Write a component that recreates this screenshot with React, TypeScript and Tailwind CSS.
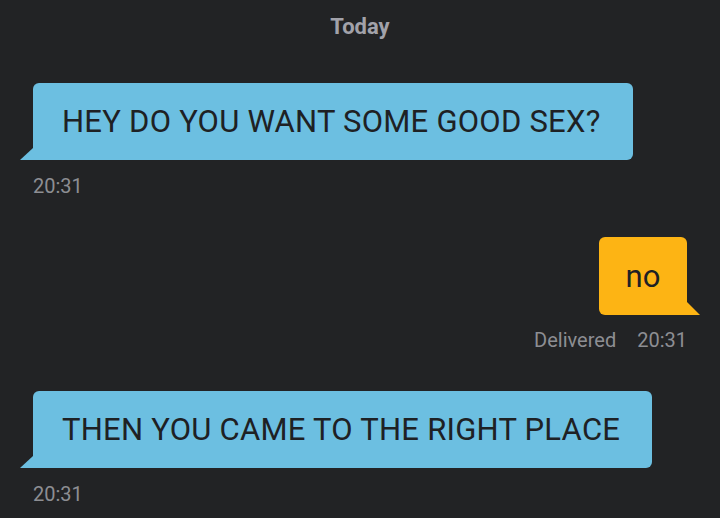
import React from "react";

const font = { fontFamily: "Roboto, 'Noto Sans', sans-serif" };

function Incoming({ text, time, className }: { text: string; time: string; className?: string }) {
  return (
    <div className={className}>
      <div className="relative ml-[33px] inline-flex h-[77px] items-center rounded-[6px] rounded-bl-none bg-[#6cbfe1] pl-[29px] pr-[32px] pt-[2px] text-[31px] tracking-[0.25px] text-[#1e2124]">
        {text}
        <svg className="absolute bottom-0 left-[-13px]" width="13" height="12" viewBox="0 0 13 12">
          <polygon points="13,0 13,12 0,12" fill="#6cbfe1" />
        </svg>
      </div>
      <div className="ml-[33px] mt-[14px] text-[20px] leading-[24px] text-[#8d8e93]">{time}</div>
    </div>
  );
}

export default function App() {
  return (
    <div className="h-[518px] w-[720px] overflow-hidden bg-[#222325]" style={font}>
      <div className="pt-[12px] text-center text-[22px] font-bold leading-[30px] text-[#a2a2aa]">Today</div>

      <Incoming className="mt-[41px]" text="HEY DO YOU WANT SOME GOOD SEX?" time="20:31" />

      <div className="mt-[39px] flex flex-col items-end pr-[33px]">
        <div className="relative flex h-[78px] w-[88px] items-center justify-center rounded-[6px] rounded-br-none bg-[#fdb414] pt-[2px] text-[31px] text-[#1e2124]">
          no
          <svg className="absolute bottom-0 right-[-13px]" width="13" height="13" viewBox="0 0 13 13">
            <polygon points="0,0 13,13 0,13" fill="#fdb414" />
          </svg>
        </div>
        <div className="mt-[13px] flex gap-[21px] text-[20px] leading-[24px] text-[#8d8e93]">
          <span>Delivered</span>
          <span>20:31</span>
        </div>
      </div>

      <Incoming className="mt-[39px]" text="THEN YOU CAME TO THE RIGHT PLACE" time="20:31" />
    </div>
  );
}
